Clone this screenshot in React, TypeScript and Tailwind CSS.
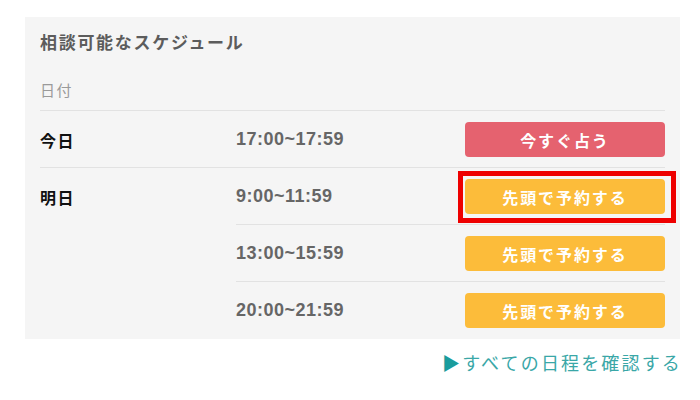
import React from "react";

const jp = { fontFamily: '"Noto Sans CJK JP", "Noto Sans", sans-serif' };
const timeFont = { fontFamily: '"Liberation Sans", "Noto Sans CJK JP", sans-serif' };

function SlotButton({ kind, highlight }: { kind: "now" | "reserve"; highlight?: boolean }) {
  const isNow = kind === "now";
  return (
    <div className="relative">
      {highlight && (
        <div className="absolute -left-[7px] -right-[11px] -top-[8px] -bottom-[9px] border-[5px] border-[#ee0000]" />
      )}
      <div
        className={`relative w-[200px] h-[35px] rounded-[4px] flex items-center justify-center text-white font-bold text-[16px] tracking-[0.12em] ${
          isNow ? "bg-[#e5626f]" : "bg-[#fcbc3a]"
        }`}
        style={jp}
      >
        {isNow ? "今すぐ占う" : "先頭で予約する"}
      </div>
    </div>
  );
}

function Slot({ time, kind, highlight, last }: { time: string; kind: "now" | "reserve"; highlight?: boolean; last?: boolean }) {
  return (
    <div className={`flex items-center justify-between pt-[11px] pb-[10px] ${last ? "" : "border-b border-[#e2e2e2]"}`}>
      <div className="text-[18px] font-bold text-[#666666] tracking-[0.5px]" style={timeFont}>
        {time}
      </div>
      <SlotButton kind={kind} highlight={highlight} />
    </div>
  );
}

export default function App() {
  return (
    <div className="w-[700px] h-[400px] bg-white overflow-hidden" style={jp}>
      <div className="pt-[17px] pl-[25px] w-[680px]">
        <div className="bg-[#f5f5f5] px-[15px] pb-[1px]">
          <div className="pt-[12px] h-[55px]">
            <div className="text-[17px] leading-[26px] font-bold text-[#5c5c5c] tracking-[0.1em]">相談可能なスケジュール</div>
          </div>
          <div className="pt-[6px] pb-[8px] border-b border-[#e2e2e2]">
            <div className="text-[15px] leading-[24px] text-[#9a9a9a] tracking-[0.1em]">日付</div>
          </div>
          <div className="flex border-b border-[#e2e2e2]">
            <div className="w-[196px] pt-[11px] h-[46px] flex items-center text-[16px] font-bold text-[#111] tracking-[0.1em]">今日</div>
            <div className="flex-1">
              <Slot time="17:00~17:59" kind="now" last />
            </div>
          </div>
          <div className="flex">
            <div className="w-[196px] pt-[11px]">
              <div className="h-[35px] flex items-center text-[16px] font-bold text-[#111] tracking-[0.1em]">明日</div>
            </div>
            <div className="flex-1">
              <Slot time="9:00~11:59" kind="reserve" highlight />
              <Slot time="13:00~15:59" kind="reserve" />
              <Slot time="20:00~21:59" kind="reserve" last />
            </div>
          </div>
        </div>
        <div className="flex justify-end pt-[9px]">
          <div className="text-[18px] leading-[28px] text-[#3aa7a7] tracking-[0.12em] mr-[-2px]">
            <span className="text-[#1a9c9c]">▶</span>すべての日程を確認する
          </div>
        </div>
      </div>
    </div>
  );
}
